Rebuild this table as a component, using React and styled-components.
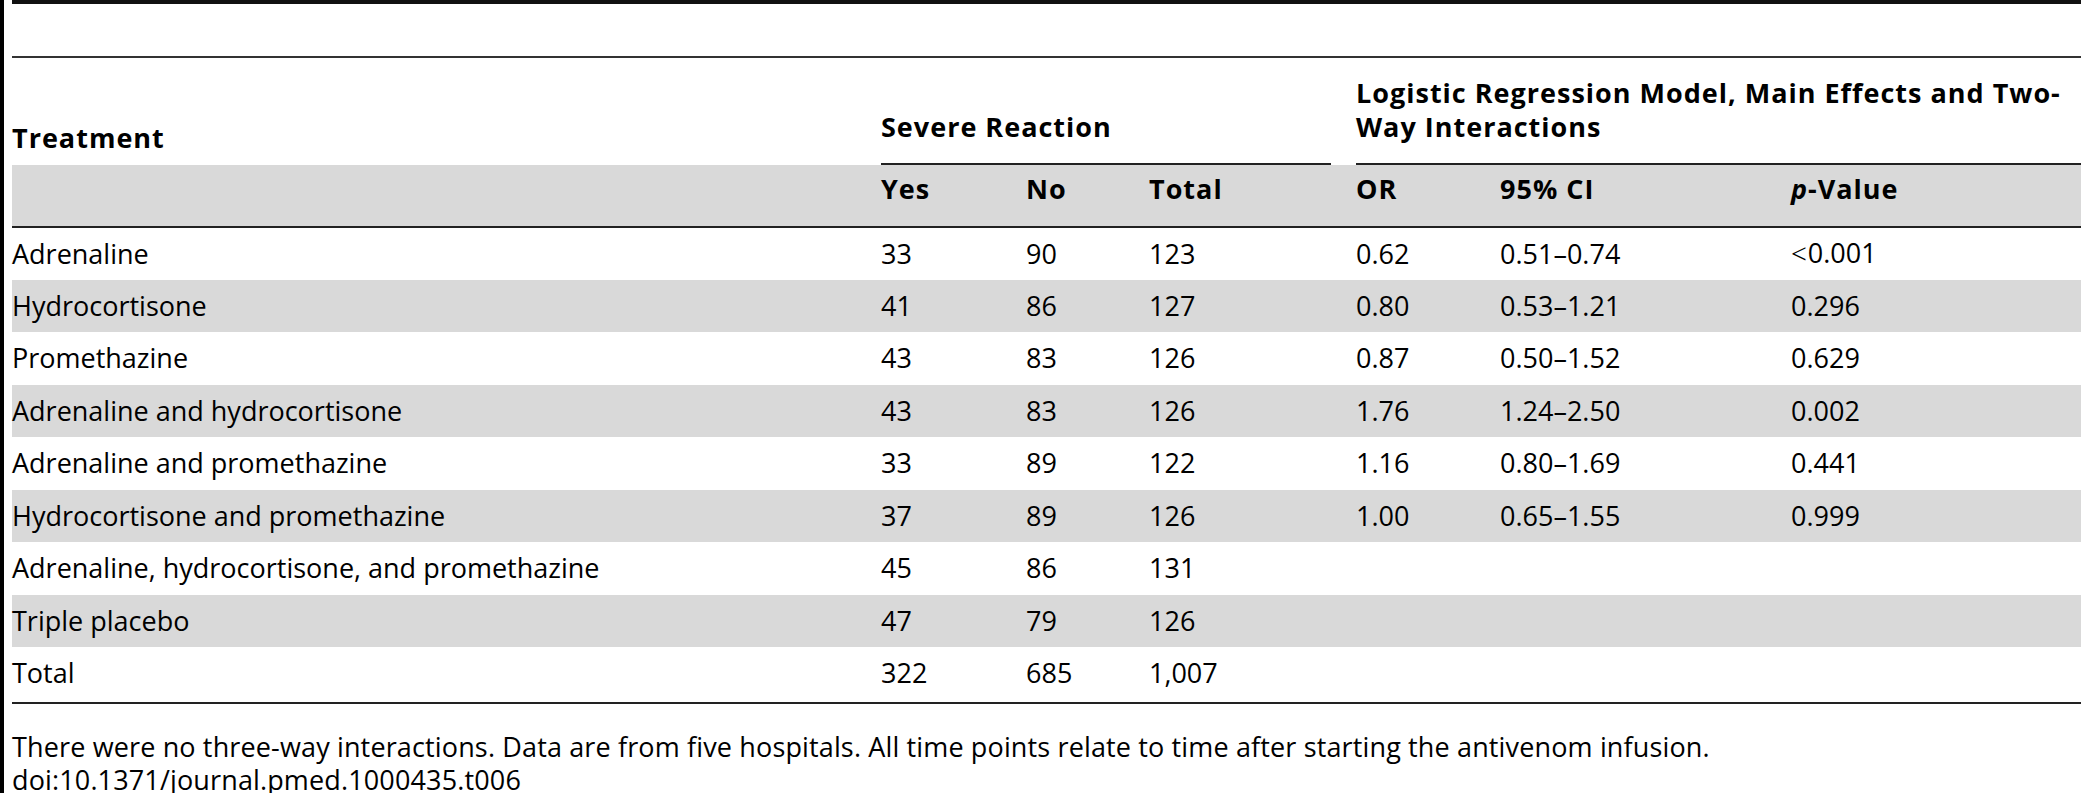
import React from "react";
import styled, { createGlobalStyle } from "styled-components";

const GlobalStyle = createGlobalStyle`
  html, body {
    margin: 0;
    padding: 0;
    background: #ffffff;
  }
  body {
    font-family: "Open Sans", "Noto Sans", "Liberation Sans", sans-serif;
    color: #000000;
  }
`;

const Frame = styled.div`
  box-sizing: border-box;
  width: 2081px;
  height: 793px;
  border-left: 4px solid #000000;
  padding-left: 8px;
`;

const TopRule = styled.div`
  height: 52px;
  border-top: 4px solid #111111;
`;

const Table = styled.table`
  width: 2069px;
  table-layout: fixed;
  border-collapse: collapse;
  border-top: 2px solid #333333;
  border-bottom: 2px solid #222222;
  font-size: 27px;
`;

const HeadCell = styled.th`
  padding: 0 0 ${(p) => p.$pb || 0}px 0;
  text-align: left;
  vertical-align: bottom;
  font-weight: 700;
  letter-spacing: 1px;
  line-height: 34px;
  height: ${(p) => p.$h || "auto"};
`;

const GroupLabel = styled.div`
  margin-right: ${(p) => (p.$flush ? 0 : 25)}px;
  padding-bottom: 19px;
  border-bottom: 2px solid #222222;
  white-space: nowrap;
`;

const SubHeadRow = styled.tr`
  background: #d9d9d9;
  border-bottom: 2px solid #222222;

  th {
    height: 54px;
    vertical-align: top;
    padding-top: 7px;
  }
`;

const Row = styled.tr`
  background: ${(p) => (p.$shaded ? "#d9d9d9" : "transparent")};
`;

const Cell = styled.td`
  padding: 0 0 ${(p) => (p.$last ? 4 : 0)}px 0;
  height: ${(p) => (p.$last ? 56 : 52.5)}px;
  box-sizing: border-box;
  vertical-align: middle;
  line-height: 34px;
  white-space: nowrap;
`;

const Less = styled.span`
  font-family: "Liberation Serif", "DejaVu Serif", serif;
  font-size: 28px;
  margin-right: 1px;
`;

const Footnote = styled.div`
  margin-top: 26px;
  font-size: 27px;
  line-height: 33px;
  letter-spacing: 0.14px;
  white-space: nowrap;
`;

const cols = [869, 145, 123, 207, 144, 291, 290];

const rows = [
  ["Adrenaline", "33", "90", "123", "0.62", "0.51–0.74", "<0.001"],
  ["Hydrocortisone", "41", "86", "127", "0.80", "0.53–1.21", "0.296"],
  ["Promethazine", "43", "83", "126", "0.87", "0.50–1.52", "0.629"],
  ["Adrenaline and hydrocortisone", "43", "83", "126", "1.76", "1.24–2.50", "0.002"],
  ["Adrenaline and promethazine", "33", "89", "122", "1.16", "0.80–1.69", "0.441"],
  ["Hydrocortisone and promethazine", "37", "89", "126", "1.00", "0.65–1.55", "0.999"],
  ["Adrenaline, hydrocortisone, and promethazine", "45", "86", "131", "", "", ""],
  ["Triple placebo", "47", "79", "126", "", "", ""],
  ["Total", "322", "685", "1,007", "", "", ""],
];

const renderValue = (v) =>
  v.startsWith("<") ? (
    <>
      <Less>&lt;</Less>
      {v.slice(1)}
    </>
  ) : (
    v
  );

export default function App() {
  return (
    <>
      <GlobalStyle />
      <Frame>
        <TopRule />
        <Table>
          <colgroup>
            {cols.map((w, i) => (
              <col key={i} style={{ width: w }} />
            ))}
          </colgroup>
          <thead>
            <tr>
              <HeadCell $h="97px" $pb={10}>Treatment</HeadCell>
              <HeadCell colSpan={3}>
                <GroupLabel>Severe Reaction</GroupLabel>
              </HeadCell>
              <HeadCell colSpan={3}>
                <GroupLabel $flush>
                  Logistic Regression Model, Main Effects and Two-
                  <br />
                  Way Interactions
                </GroupLabel>
              </HeadCell>
            </tr>
            <SubHeadRow>
              <HeadCell />
              <HeadCell>Yes</HeadCell>
              <HeadCell>No</HeadCell>
              <HeadCell>Total</HeadCell>
              <HeadCell>OR</HeadCell>
              <HeadCell>95% CI</HeadCell>
              <HeadCell>
                <i>p</i>-Value
              </HeadCell>
            </SubHeadRow>
          </thead>
          <tbody>
            {rows.map((r, i) => (
              <Row key={r[0]} $shaded={i % 2 === 1}>
                {r.map((v, j) => (
                  <Cell key={j} $last={i === rows.length - 1}>
                    {renderValue(v)}
                  </Cell>
                ))}
              </Row>
            ))}
          </tbody>
        </Table>
        <Footnote>
          There were no three-way interactions. Data are from five hospitals. All time points relate to time after
          starting the antivenom infusion.
          <br />
          doi:10.1371/journal.pmed.1000435.t006
        </Footnote>
      </Frame>
    </>
  );
}
